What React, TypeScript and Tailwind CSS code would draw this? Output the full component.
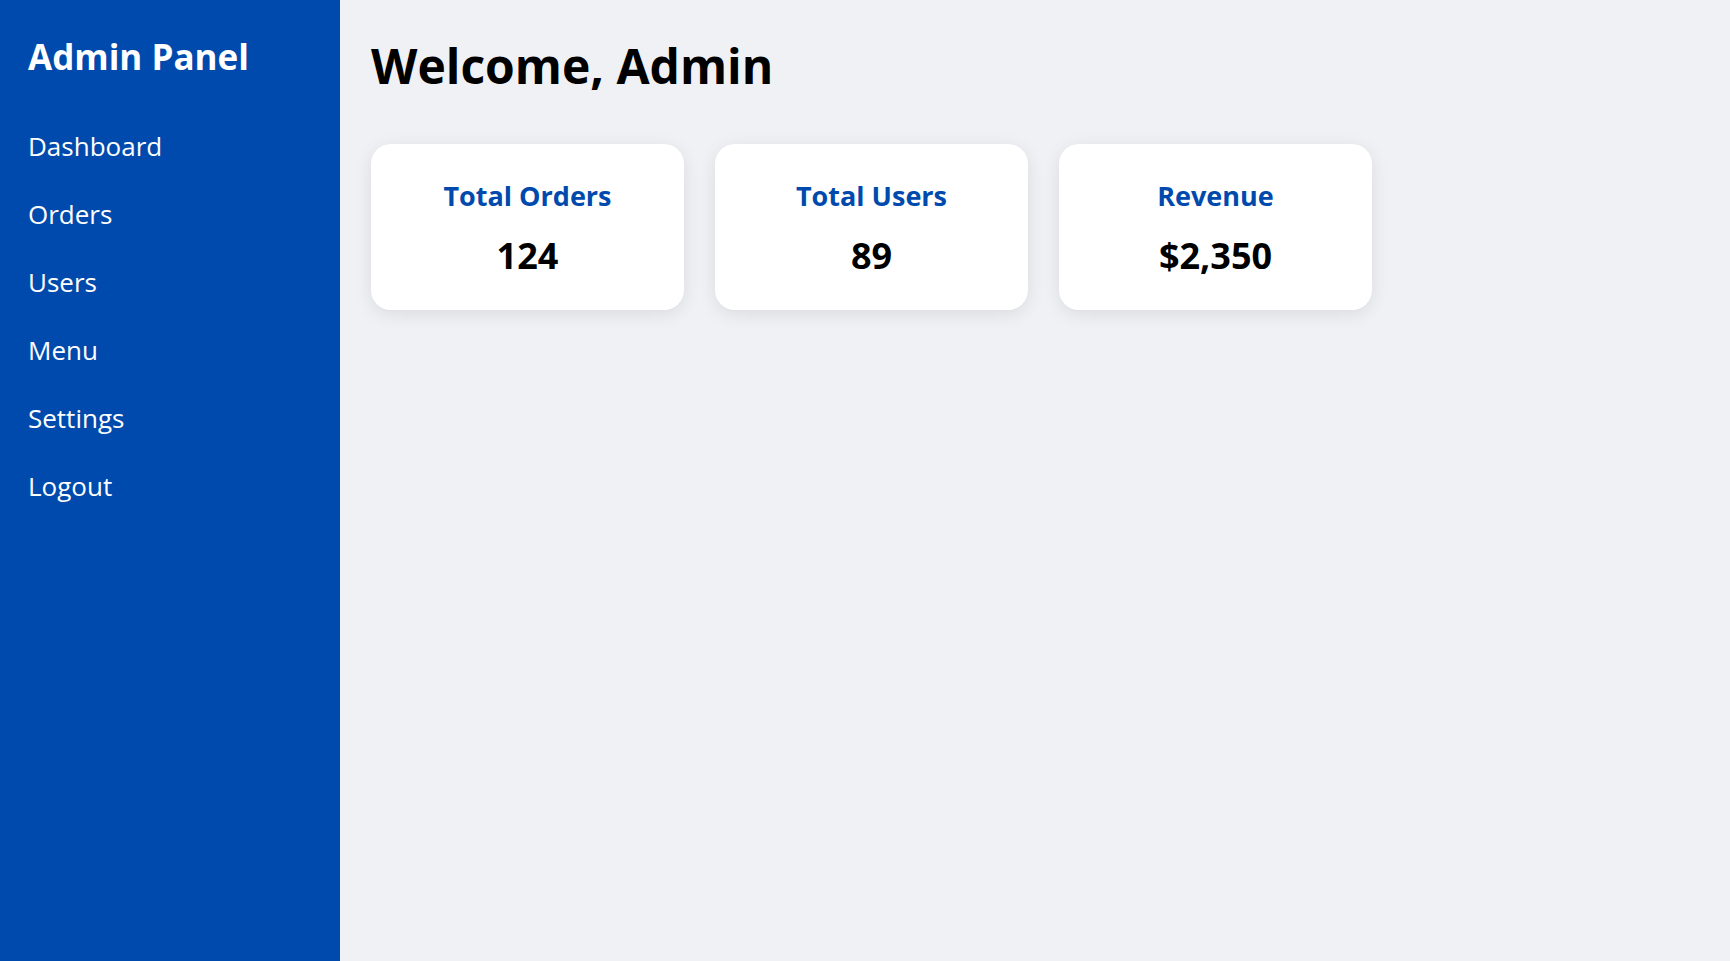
export default function App() {
  const nav = ["Dashboard", "Orders", "Users", "Menu", "Settings", "Logout"];
  const cards = [
    { t: "Total Orders", v: "124" },
    { t: "Total Users", v: "89" },
    { t: "Revenue", v: "$2,350" },
  ];
  return (
    <div className="flex h-[961px] w-full font-['Open_Sans',sans-serif]">
      <aside className="w-[340px] shrink-0 bg-[#004aad] pl-[28px] pt-[39px] text-white">
        <h2 className="text-[35px] font-bold leading-[36px]">Admin Panel</h2>
        <nav className="mt-[37px] flex flex-col">
          {nav.map((n) => (
            <a key={n} className="text-[26px] leading-[68px]">
              {n}
            </a>
          ))}
        </nav>
      </aside>
      <main className="flex-1 bg-[#f0f1f5] pl-[31px] pt-[42px]">
        <h1 className="text-[48px] font-bold leading-[48px] text-black">Welcome, Admin</h1>
        <div className="mt-[54px] flex gap-[31px]">
          {cards.map((c) => (
            <div
              key={c.t}
              className="flex h-[166px] w-[313px] flex-col items-center rounded-[20px] bg-white pt-[38px] shadow-[0_4px_18px_rgba(0,0,0,0.09)]"
            >
              <div className="text-[27px] font-bold leading-[28px] text-[#004aad]">{c.t}</div>
              <div className="mt-[28px] text-[36px] font-bold leading-[36px] text-black">{c.v}</div>
            </div>
          ))}
        </div>
      </main>
    </div>
  );
}
